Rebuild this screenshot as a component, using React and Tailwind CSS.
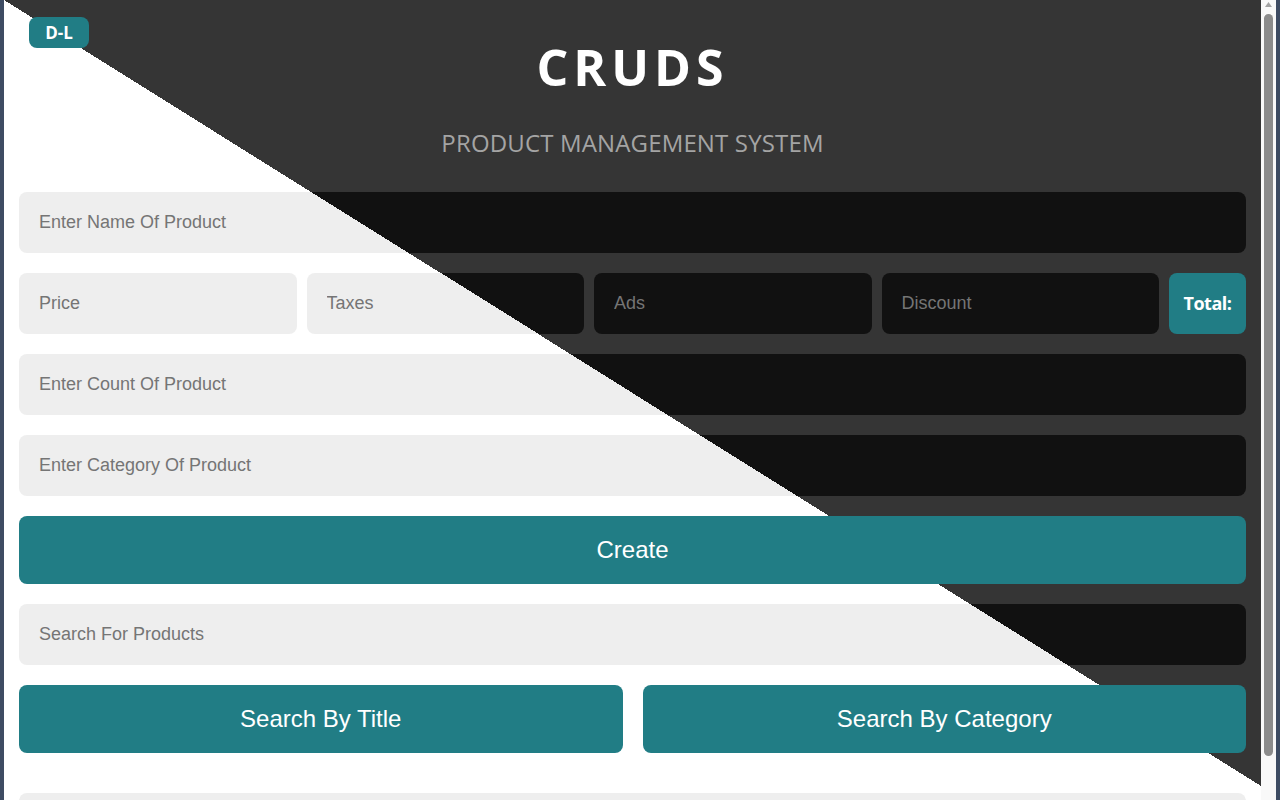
import React from 'react';

// gradient that lines up with the page diagonal (viewport coords)
const fieldBg =
  'bg-[#eeeeee] bg-[linear-gradient(to_top_right,#eeeeee_50%,#111111_50%)] [background-attachment:fixed] [background-size:1257px_786px] [background-position:4px_0px] bg-no-repeat';

const Field = ({ placeholder, className = '' }) => (
  <input
    type="text"
    placeholder={placeholder}
    className={`h-[61px] w-full min-w-0 rounded-lg border-0 px-5 text-[18px] text-[#ddd] outline-none placeholder:text-[#757575] ${fieldBg} ${className}`}
    style={{ fontFamily: '"Liberation Sans", Arial, sans-serif' }}
  />
);

const TealButton = ({ children, className = '' }) => (
  <button
    className={`h-[68px] rounded-lg bg-[#217d85] text-[24px] text-white ${className}`}
    style={{ fontFamily: '"Liberation Sans", Arial, sans-serif' }}
  >
    {children}
  </button>
);

const ScrollBar = () => (
  <div className="flex w-[15px] shrink-0 flex-col items-center bg-[#f9f9f9]">
    <svg width="7" height="5" viewBox="0 0 7 5" className="mt-[2px]">
      <path d="M3.5 0 L7 5 L0 5 Z" fill="#a3a3a3" />
    </svg>
    <div className="mt-[7px] h-[742px] w-[9px] rounded-full bg-[#8c8c8c]" />
  </div>
);

export default function App() {
  return (
    <div className="flex h-screen overflow-hidden bg-[#3e4c63] px-[4px]">
      <div
        className="relative flex-1 overflow-hidden bg-white bg-[linear-gradient(to_top_right,#ffffff_50%,#353535_50%)] bg-no-repeat [background-size:100%_786px] px-[15px] pb-[10px]"
        style={{ fontFamily: '"Open Sans", "Noto Sans", sans-serif' }}
      >
        {/* Dark / light toggle */}
        <button className="absolute left-[25px] top-[17px] flex h-[31px] w-[60px] items-center justify-center rounded-lg bg-[#217d85] text-[17px] font-bold text-white">
          D-L
        </button>

        {/* Header */}
        <div className="pt-[42px] text-center">
          <h1 className="text-[50px] font-bold leading-[50px] tracking-[5px] text-white">
            CRUDS
          </h1>
          <p className="mt-[39px] text-[24px] leading-[24px] tracking-[0.15px] text-[#a4a4a4]">
            PRODUCT MANAGEMENT SYSTEM
          </p>
        </div>

        {/* Inputs */}
        <div className="mt-[37px] flex flex-col gap-[20px]">
          <Field placeholder="Enter Name Of Product" />

          <div className="flex gap-[10px]">
            <Field placeholder="Price" />
            <Field placeholder="Taxes" />
            <Field placeholder="Ads" />
            <Field placeholder="Discount" />
            <div className="flex h-[61px] w-[77px] shrink-0 items-center justify-center rounded-lg bg-[#217d85] text-[18px] font-bold tracking-[-0.5px] text-white">
              Total:
            </div>
          </div>

          <Field placeholder="Enter Count Of Product" />
          <Field placeholder="Enter Category Of Product" />

          <TealButton className="w-full">Create</TealButton>

          <Field placeholder="Search For Products" />

          <div className="flex gap-[20px]">
            <TealButton className="flex-1">Search By Title</TealButton>
            <TealButton className="flex-1">Search By Category</TealButton>
          </div>
        </div>

        {/* Table area */}
        <div className={`mt-[40px] h-[32px] rounded-lg ${fieldBg}`} />
      </div>
      <ScrollBar />
    </div>
  );
}
